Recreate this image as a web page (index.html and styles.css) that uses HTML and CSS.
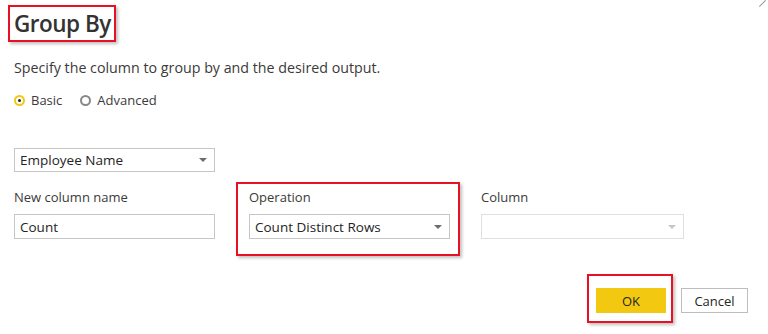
FILE: index.html
```html
<!DOCTYPE html>
<html lang="en">
<head>
  <meta charset="UTF-8">
  <title>Group By</title>
  <link rel="stylesheet" href="styles.css">
</head>
<body>
  <div class="dialog">
    <span class="close"></span>
    <div class="title-row">
      <h1 class="title mark">Group By</h1>
    </div>

    <p class="intro">Specify the column to group by and the desired output.</p>

    <div class="modes">
      <label class="radio"><span class="dot checked"></span>Basic</label>
      <label class="radio"><span class="dot"></span>Advanced</label>
    </div>

    <div class="select group-by">
      <span>Employee Name</span>
      <span class="caret"></span>
    </div>

    <div class="fields">
      <div class="field">
        <div class="label">New column name</div>
        <div class="input">Count</div>
      </div>
      <div class="field mark op">
        <div class="label">Operation</div>
        <div class="select">
          <span>Count Distinct Rows</span>
          <span class="caret"></span>
        </div>
      </div>
      <div class="field col">
        <div class="label">Column</div>
        <div class="select disabled">
          <span></span>
          <span class="caret"></span>
        </div>
      </div>
    </div>

    <div class="actions">
      <div class="mark ok-wrap">
        <button class="btn primary">OK</button>
      </div>
      <button class="btn">Cancel</button>
    </div>
  </div>
</body>
</html>
```

FILE: styles.css
```css
body {
  margin: 0;
  font-family: "Open Sans", "Noto Sans", sans-serif;
  color: #3b3a39;
  background: #fff;
}

.dialog {
  position: relative;
  width: 768px;
  height: 334px;
  padding: 0 14px;
  box-sizing: border-box;
  overflow: hidden;
}

.close {
  position: absolute;
  right: 1px;
  top: 3px;
  width: 9px;
  height: 1px;
  background: #999;
  transform: rotate(-45deg);
}

/* red annotation boxes */
.mark {
  border: 2px solid #e81123;
  box-shadow: 2px 2px 3px rgba(0, 0, 0, 0.25);
}

.title-row {
  padding-top: 5px;
}

.title {
  display: inline-block;
  margin: 0 0 0 -6px;
  padding: 3px 3px 2px 4px;
  font-size: 22.5px;
  font-weight: 600;
  line-height: 28px;
  letter-spacing: -0.5px;
  color: #333;
}

.intro {
  margin: 17px 0 0;
  font-size: 14.25px;
  line-height: 18px;
}

.modes {
  display: flex;
  gap: 18px;
  margin-top: 14px;
  font-size: 13px;
  line-height: 18px;
}

.radio {
  display: flex;
  align-items: center;
  gap: 6px;
}

.dot {
  width: 7px;
  height: 7px;
  border: 2px solid #8a8886;
  border-radius: 50%;
  position: relative;
}

.dot.checked {
  border-color: #f2c811;
}

.dot.checked::after {
  content: "";
  position: absolute;
  left: 2px;
  top: 2px;
  width: 3px;
  height: 3px;
  border-radius: 50%;
  background: #252423;
}

.select,
.input {
  display: flex;
  align-items: center;
  justify-content: space-between;
  width: 200px;
  height: 24px;
  padding: 0 7px 0 5px;
  box-sizing: border-box;
  border: 1px solid #c8c6c4;
  font-size: 13.5px;
  color: #252423;
}

.group-by {
  margin-top: 39px;
  height: 24px;
  width: 201px;
}

.caret {
  width: 0;
  height: 0;
  border-left: 4px solid transparent;
  border-right: 4px solid transparent;
  border-top: 4px solid #6e6c6a;
}

.select.disabled {
  border-color: #e1dfdd;
}

.select.disabled .caret {
  border-top-color: #c8c6c4;
}

.fields {
  display: flex;
  margin-top: 16px;
}

.label {
  font-size: 13px;
  line-height: 18px;
  margin-bottom: 8px;
}

.field .input,
.field .select {
  width: 201px;
  height: 25px;
}

.op {
  margin: -6px 0 -17px 21px;
  padding: 4px 8px 14px 11px;
}

.col {
  margin-left: 21px;
}

.col .select {
  width: 203px;
}

.actions {
  display: flex;
  justify-content: flex-end;
  align-items: flex-start;
  gap: 8px;
  margin-top: 35px;
  padding-right: 6px;
}

.ok-wrap {
  padding: 12px 5px 8px 7px;
}

.btn {
  height: 25px;
  padding: 0;
  border: 1px solid #bdbdbd;
  background: #fff;
  font-family: inherit;
  font-size: 13px;
  color: #252423;
  width: 67px;
}

.actions > .btn {
  margin-top: 14px;
}

.btn.primary {
  width: 70px;
  background: #f2c811;
  border-color: #f2c811;
}
```
